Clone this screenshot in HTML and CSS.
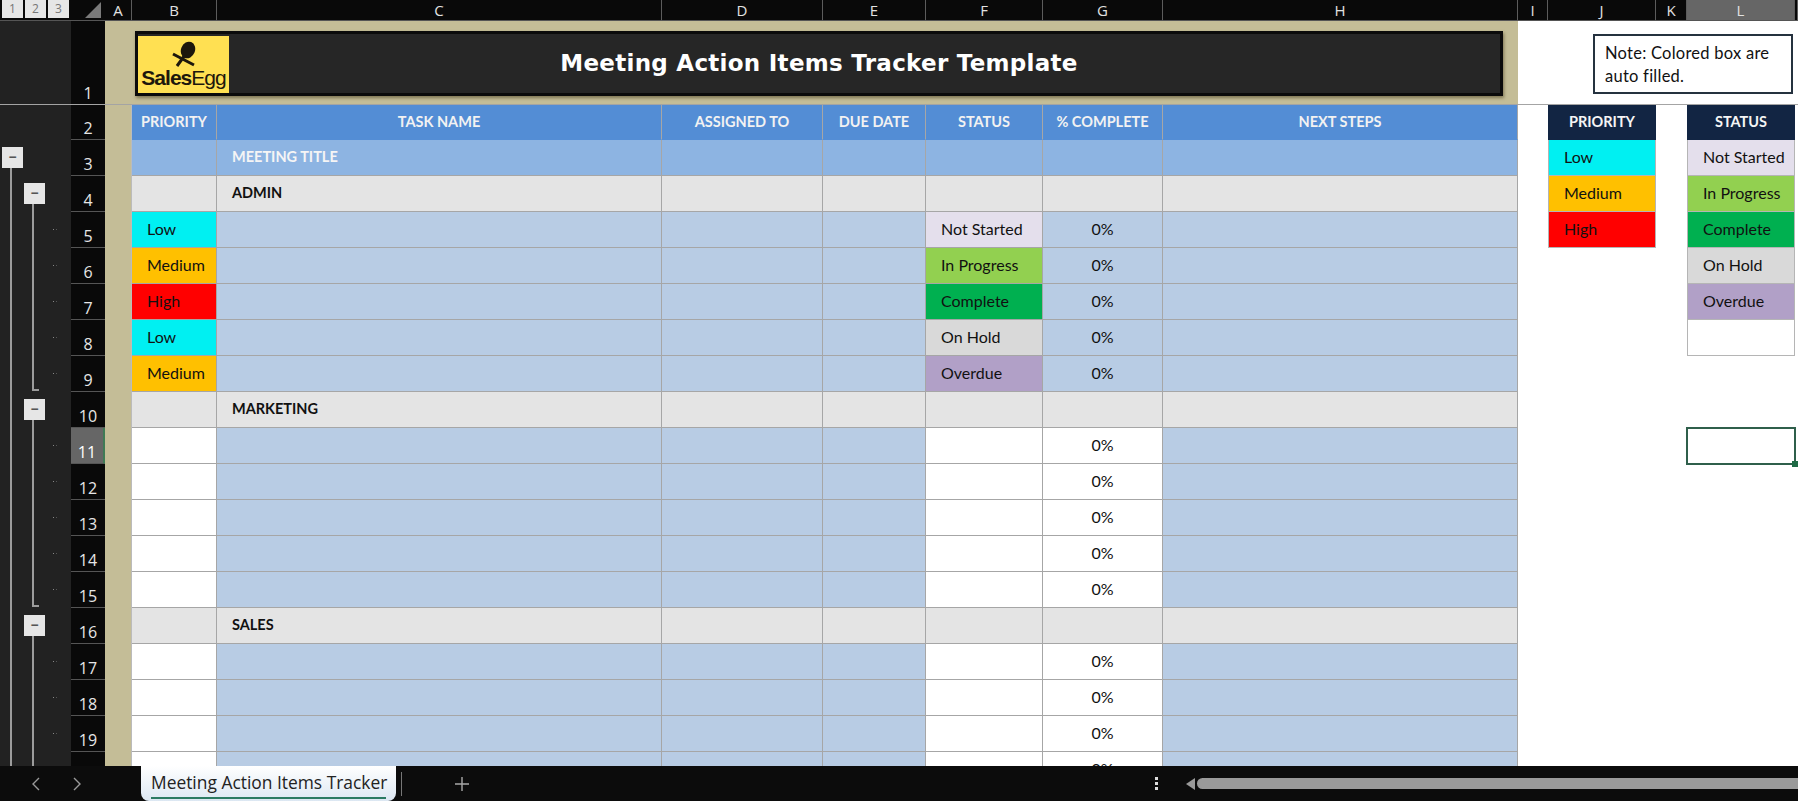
FILE: index.html
```html
<!DOCTYPE html>
<html lang="en">
<head>
  <meta charset="UTF-8" />
  <title>Meeting Action Items Tracker</title>
  <link rel="stylesheet" href="styles.css">
</head>
<body>
<div class="sheet">
<table class="grid">
  <colgroup>
    <col class="c-g1"><col class="c-g2"><col class="c-g3"><col class="c-rn">
    <col class="c-a"><col class="c-b"><col class="c-c"><col class="c-d"><col class="c-e">
    <col class="c-f"><col class="c-g"><col class="c-h"><col class="c-i"><col class="c-j">
    <col class="c-k"><col class="c-l"><col class="c-m">
  </colgroup>

  <!-- column letters -->
  <tr class="r-head">
    <td colspan="3" class="levels"><div class="level-row"><span class="level">1</span><span class="level">2</span><span class="level">3</span></div></td>
    <td class="corner"><svg class="corner-tri" width="34" height="20" viewBox="0 0 34 20"><polygon points="30,2 30,18 14,18" fill="#7a7a7a"/></svg></td>
    <td class="cl">A</td><td class="cl">B</td><td class="cl">C</td><td class="cl">D</td><td class="cl">E</td>
    <td class="cl">F</td><td class="cl">G</td><td class="cl">H</td><td class="cl">I</td><td class="cl">J</td>
    <td class="cl">K</td><td class="cl cl-on">L</td><td class="cl"></td>
  </tr>

  <!-- banner -->
  <tr class="r-1">
    <td class="g"></td><td class="g"></td><td class="g"></td><th class="rn">1</th>
    <td colspan="8" class="banner-cell">
      <div class="banner">
        <div class="logo">
          <svg class="logo-mark" width="34" height="28" viewBox="0 0 34 28">
            <ellipse cx="20" cy="9" rx="7" ry="8.5" transform="rotate(22 20 9)" fill="#1d170c"/>
            <path d="M5 13 L26 24 M9 25 L17 14" stroke="#1d170c" stroke-width="3" fill="none"/>
          </svg>
          <div class="logo-name"><b>Sales</b>Egg</div>
        </div>
        <h1>Meeting Action Items Tracker Template</h1>
        <div></div>
      </div>
    </td>
    <td colspan="5" class="note-cell"><div class="note">Note: Colored box are auto filled.</div></td>
  </tr>

  <!-- table header -->
  <tr class="r-2">
    <td class="g"></td><td class="g"></td><td class="g"></td><th class="rn">2</th><td class="a"></td>
    <td class="hd">PRIORITY</td><td class="hd">TASK NAME</td><td class="hd">ASSIGNED TO</td><td class="hd">DUE DATE</td>
    <td class="hd">STATUS</td><td class="hd">% COMPLETE</td><td class="hd">NEXT STEPS</td>
    <td></td><td class="lg-hd">PRIORITY</td><td></td><td class="lg-hd">STATUS</td><td></td>
  </tr>

  <tr>
    <td class="g"><span class="minus m1">&minus;</span></td><td class="g"></td><td class="g"></td><th class="rn">3</th><td class="a"></td>
    <td class="mt"></td><td class="mt ttl">MEETING TITLE</td><td class="mt"></td><td class="mt"></td><td class="mt"></td><td class="mt"></td><td class="mt"></td>
    <td></td><td class="lg low">Low</td><td></td><td class="lg ns">Not Started</td><td></td>
  </tr>
  <tr>
    <td class="g ln1"></td><td class="g"><span class="minus m2">&minus;</span></td><td class="g"></td><th class="rn">4</th><td class="a"></td>
    <td class="grp"></td><td class="grp ttl">ADMIN</td><td class="grp"></td><td class="grp"></td><td class="grp"></td><td class="grp"></td><td class="grp"></td>
    <td></td><td class="lg med">Medium</td><td></td><td class="lg prog">In Progress</td><td></td>
  </tr>
  <tr>
    <td class="g ln1"></td><td class="g ln2"></td><td class="g"><i class="dot"></i></td><th class="rn">5</th><td class="a"></td>
    <td class="t low">Low</td><td class="t"></td><td class="t"></td><td class="t"></td><td class="t ns">Not Started</td><td class="t pc">0%</td><td class="t"></td>
    <td></td><td class="lg high">High</td><td></td><td class="lg comp">Complete</td><td></td>
  </tr>
  <tr>
    <td class="g ln1"></td><td class="g ln2"></td><td class="g"><i class="dot"></i></td><th class="rn">6</th><td class="a"></td>
    <td class="t med">Medium</td><td class="t"></td><td class="t"></td><td class="t"></td><td class="t prog">In Progress</td><td class="t pc">0%</td><td class="t"></td>
    <td></td><td></td><td></td><td class="lg hold">On Hold</td><td></td>
  </tr>
  <tr>
    <td class="g ln1"></td><td class="g ln2"></td><td class="g"><i class="dot"></i></td><th class="rn">7</th><td class="a"></td>
    <td class="t high">High</td><td class="t"></td><td class="t"></td><td class="t"></td><td class="t comp">Complete</td><td class="t pc">0%</td><td class="t"></td>
    <td></td><td></td><td></td><td class="lg over">Overdue</td><td></td>
  </tr>
  <tr>
    <td class="g ln1"></td><td class="g ln2"></td><td class="g"><i class="dot"></i></td><th class="rn">8</th><td class="a"></td>
    <td class="t low">Low</td><td class="t"></td><td class="t"></td><td class="t"></td><td class="t hold">On Hold</td><td class="t pc">0%</td><td class="t"></td>
    <td></td><td></td><td></td><td class="lg"></td><td></td>
  </tr>
  <tr>
    <td class="g ln1"></td><td class="g end2"></td><td class="g"><i class="dot"></i></td><th class="rn">9</th><td class="a"></td>
    <td class="t med">Medium</td><td class="t"></td><td class="t"></td><td class="t"></td><td class="t over">Overdue</td><td class="t pc">0%</td><td class="t"></td>
    <td></td><td></td><td></td><td></td><td></td>
  </tr>

  <tr>
    <td class="g ln1"></td><td class="g"><span class="minus m2">&minus;</span></td><td class="g"></td><th class="rn">10</th><td class="a"></td>
    <td class="grp"></td><td class="grp ttl">MARKETING</td><td class="grp"></td><td class="grp"></td><td class="grp"></td><td class="grp"></td><td class="grp"></td>
    <td></td><td></td><td></td><td></td><td></td>
  </tr>
  <tr>
    <td class="g ln1"></td><td class="g ln2"></td><td class="g"><i class="dot"></i></td><th class="rn rn-on">11</th><td class="a"></td>
    <td class="e"></td><td class="t"></td><td class="t"></td><td class="t"></td><td class="e"></td><td class="e pc">0%</td><td class="t"></td>
    <td></td><td></td><td></td><td class="picked"><i class="handle"></i></td><td></td>
  </tr>
  <tr>
    <td class="g ln1"></td><td class="g ln2"></td><td class="g"><i class="dot"></i></td><th class="rn">12</th><td class="a"></td>
    <td class="e"></td><td class="t"></td><td class="t"></td><td class="t"></td><td class="e"></td><td class="e pc">0%</td><td class="t"></td>
    <td></td><td></td><td></td><td></td><td></td>
  </tr>
  <tr>
    <td class="g ln1"></td><td class="g ln2"></td><td class="g"><i class="dot"></i></td><th class="rn">13</th><td class="a"></td>
    <td class="e"></td><td class="t"></td><td class="t"></td><td class="t"></td><td class="e"></td><td class="e pc">0%</td><td class="t"></td>
    <td></td><td></td><td></td><td></td><td></td>
  </tr>
  <tr>
    <td class="g ln1"></td><td class="g ln2"></td><td class="g"><i class="dot"></i></td><th class="rn">14</th><td class="a"></td>
    <td class="e"></td><td class="t"></td><td class="t"></td><td class="t"></td><td class="e"></td><td class="e pc">0%</td><td class="t"></td>
    <td></td><td></td><td></td><td></td><td></td>
  </tr>
  <tr>
    <td class="g ln1"></td><td class="g end2"></td><td class="g"><i class="dot"></i></td><th class="rn">15</th><td class="a"></td>
    <td class="e"></td><td class="t"></td><td class="t"></td><td class="t"></td><td class="e"></td><td class="e pc">0%</td><td class="t"></td>
    <td></td><td></td><td></td><td></td><td></td>
  </tr>

  <tr>
    <td class="g ln1"></td><td class="g"><span class="minus m2">&minus;</span></td><td class="g"></td><th class="rn">16</th><td class="a"></td>
    <td class="grp"></td><td class="grp ttl">SALES</td><td class="grp"></td><td class="grp"></td><td class="grp"></td><td class="grp"></td><td class="grp"></td>
    <td></td><td></td><td></td><td></td><td></td>
  </tr>
  <tr>
    <td class="g ln1"></td><td class="g ln2"></td><td class="g"><i class="dot"></i></td><th class="rn">17</th><td class="a"></td>
    <td class="e"></td><td class="t"></td><td class="t"></td><td class="t"></td><td class="e"></td><td class="e pc">0%</td><td class="t"></td>
    <td></td><td></td><td></td><td></td><td></td>
  </tr>
  <tr>
    <td class="g ln1"></td><td class="g ln2"></td><td class="g"><i class="dot"></i></td><th class="rn">18</th><td class="a"></td>
    <td class="e"></td><td class="t"></td><td class="t"></td><td class="t"></td><td class="e"></td><td class="e pc">0%</td><td class="t"></td>
    <td></td><td></td><td></td><td></td><td></td>
  </tr>
  <tr>
    <td class="g ln1"></td><td class="g ln2"></td><td class="g"><i class="dot"></i></td><th class="rn">19</th><td class="a"></td>
    <td class="e"></td><td class="t"></td><td class="t"></td><td class="t"></td><td class="e"></td><td class="e pc">0%</td><td class="t"></td>
    <td></td><td></td><td></td><td></td><td></td>
  </tr>
  <tr>
    <td class="g ln1"></td><td class="g ln2"></td><td class="g"></td><th class="rn"></th><td class="a"></td>
    <td class="e"></td><td class="t"></td><td class="t"></td><td class="t"></td><td class="e"></td><td class="e pc">0%</td><td class="t"></td>
    <td></td><td></td><td></td><td></td><td></td>
  </tr>
</table>
</div>

<!-- sheet tabs -->
<div class="tabbar">
  <div class="tab-nav">
    <svg width="10" height="16" viewBox="0 0 10 16"><path d="M8 2 L2 8 L8 14" fill="none" stroke="#9a9a9a" stroke-width="1.4"/></svg>
    <svg width="10" height="16" viewBox="0 0 10 16"><path d="M2 2 L8 8 L2 14" fill="none" stroke="#9a9a9a" stroke-width="1.4"/></svg>
  </div>
  <div class="tab"><span class="tab-name">Meeting Action Items Tracker</span></div>
  <div class="tab-sep"></div>
  <svg class="tab-add" width="16" height="16" viewBox="0 0 16 16"><path d="M8 1 V15 M1 8 H15" stroke="#a8a8a8" stroke-width="1.4"/></svg>
  <div class="tab-more"><i></i><i></i><i></i></div>
  <svg class="scroll-left" width="9" height="12" viewBox="0 0 9 12"><polygon points="9,0 9,12 0,6" fill="#9a9a9a"/></svg>
  <div class="scroll-thumb"></div>
</div>
</body>
</html>
```

FILE: styles.css
```css
*{box-sizing:border-box}
html,body{margin:0;height:100%;overflow:hidden}
body{display:flex;flex-direction:column;background:#0c0c0c;font-family:"Lato","Open Sans",sans-serif}

.sheet{height:766px;overflow:hidden;background:#fff}

/* ---------- Grid ---------- */
.grid{table-layout:fixed;width:1798px;border-collapse:separate;border-spacing:0;font-size:16px;color:#111}
.grid td,.grid th{padding:0;overflow:hidden;white-space:nowrap}
.grid tr{height:36px}
.c-g1{width:23px}.c-g2{width:24px}.c-g3{width:24px}.c-rn{width:34px}
.c-a{width:27px}.c-b{width:85px}.c-c{width:445px}.c-d{width:161px}.c-e{width:103px}
.c-f{width:117px}.c-g{width:120px}.c-h{width:355px}.c-i{width:30px}.c-j{width:108px}
.c-k{width:31px}.c-l{width:108px}.c-m{width:3px}

/* ---------- Column letters ---------- */
.grid .r-head{height:20px}
.r-head td{background:#090909;border-bottom:1px solid #555}
.levels{vertical-align:top}
.level-row{display:flex;gap:2px;padding-left:2px}
.level{width:21px;height:18px;background:#e6e6e6;color:#777;font:12px/18px "Open Sans",sans-serif;text-align:center}
.corner-tri{display:block}
.grid .cl{color:#e2e2e2;font:400 15px/19px "Open Sans",sans-serif;text-align:center;border-right:1px solid #5c5c5c}
.grid .cl-on{background:#666;color:#e2e2e2}

/* ---------- Gutter ---------- */
.g{background:#222;vertical-align:top}
.ln1{background:#222 linear-gradient(#9c9c9c,#9c9c9c) no-repeat 10px 0/2px 100%}
.ln2{background:#222 linear-gradient(#9c9c9c,#9c9c9c) no-repeat 9px 0/2px 100%}
.end2{background:#222;background-image:linear-gradient(#9c9c9c,#9c9c9c),linear-gradient(#9c9c9c,#9c9c9c);background-repeat:no-repeat;background-position:9px 0,9px 33px;background-size:2px 35px,7px 2px}
.minus{display:block;width:21px;height:21px;margin-top:7px;background:#e6e6e6;color:#555;font:bold 14px/20px "Open Sans",sans-serif;text-align:center}
.m1{margin-left:2px}
.m2{margin-left:1px}
td.g:has(.m1){background:#222 linear-gradient(#9c9c9c,#9c9c9c) no-repeat 10px 28px/2px 100%}
td.g:has(.m2){background:#222 linear-gradient(#9c9c9c,#9c9c9c) no-repeat 9px 28px/2px 100%}
.dot{display:block;width:1px;height:1px;margin:17px 0 0 6px;background:#888;box-shadow:3px 0 #555}

.rn{background:#090909;color:#e6e6e6;font:400 16px/22px "Open Sans",sans-serif;text-align:center;vertical-align:bottom;border-bottom:1px solid #555}
.rn-on{background:#666;color:#fff;border-right:2px solid #3f7a55}

/* ---------- Banner ---------- */
.grid .r-1{height:84px}
.r-1 td,.r-1 th{border-bottom:1px solid #a4a4a4}
.banner-cell{background:#c4bd97;padding:10px 15px 8px 30px !important}
.banner{display:grid;grid-template-columns:1fr auto 1fr;align-items:center;height:65px;background:#262626;border:3px solid #0b0b0b;box-shadow:1px 2px 3px rgba(60,50,20,.5)}
.banner h1{margin:0 0 2px;color:#fff;font:bold 23px "DejaVu Sans",sans-serif;letter-spacing:.28px}
.logo{width:91px;height:57px;margin-top:1px;background:#ffe052;display:flex;flex-direction:column;align-items:center;overflow:hidden}
.logo-mark{display:block;margin:5px 0 0 2px;flex:none}
.logo-name{margin-top:-3px;color:#1d170c;font:21px/24px "Liberation Sans",sans-serif;letter-spacing:-1px}
.note-cell{padding-right:5px !important;vertical-align:top}
.note{width:200px;height:60px;margin:13px 0 0 auto;padding:6px 10px;border:2px solid #25323f;font:16.5px/23px "Lato",sans-serif;letter-spacing:.25px;white-space:normal;background:#fff;color:#111}

/* ---------- Cells ---------- */
.a{background:#c4bd97;border-right:1px solid #bbb}
.grid .r-2{height:35px}
.hd,.mt,.grp,.t,.e{border-right:1px solid #a6a6a6;border-bottom:1px solid #a6a6a6;padding-bottom:2px !important}
.hd{background:#538dd5;color:#f2f2f2;font-size:14.5px;font-weight:700;text-align:center;border-bottom-color:#538dd5}
.mt{background:#8db4e2}
.grp{background:#e4e4e4}
.t{background:#b8cce4;padding-left:15px !important}
.e{background:#fff}
.ttl{padding-left:15px !important;font-size:14.5px;font-weight:700}
.mt.ttl{color:#f5f5f5}
.pc{padding-left:0 !important;text-align:center}

.lg-hd{background:#122543;color:#f5f5f5;font-size:14.5px;font-weight:700;text-align:center;padding-bottom:2px !important}
.lg{padding:0 0 2px 15px !important;border:1px solid #b5b5b5;border-top:none}

.low{background:#00f0f2}
.med{background:#ffc000}
.high{background:#ff0000}
.ns{background:#e4dfec}
.prog{background:#92d050}
.comp{background:#00b050}
.hold{background:#d9d9d9}
.over{background:#b1a0c7}

.grid .picked{position:relative;outline:2px solid #2f5f4b;outline-offset:-1px;overflow:visible}
.handle{position:absolute;right:-3px;bottom:-3px;width:6px;height:6px;background:#1f6b45}

/* ---------- Tab bar ---------- */
.tabbar{height:35px;display:flex;align-items:center;background:#0c0c0c;overflow:hidden}
.tab-nav{width:141px;display:flex;gap:31px;padding-left:31px}
.tab{width:255px;height:35px;padding:0 10px;background:linear-gradient(#fff,#dce7f2);border-radius:0 0 8px 8px;color:#222;font:17.4px/33px "Open Sans",sans-serif;white-space:nowrap}
.tab-name{display:block;width:235px;height:33px;border-bottom:2px solid #2b7a62}
.tab-sep{width:1px;height:24px;margin-left:5px;background:#777}
.tab-add{margin-left:52px}
.tab-more{display:flex;flex-direction:column;gap:2px;margin-left:685px}
.tab-more i{display:block;width:3px;height:3px;background:#ddd}
.scroll-left{margin-left:28px}
.scroll-thumb{flex:1;height:11px;margin-left:2px;background:#9a9a9a;border-radius:6px 0 0 6px}
```
